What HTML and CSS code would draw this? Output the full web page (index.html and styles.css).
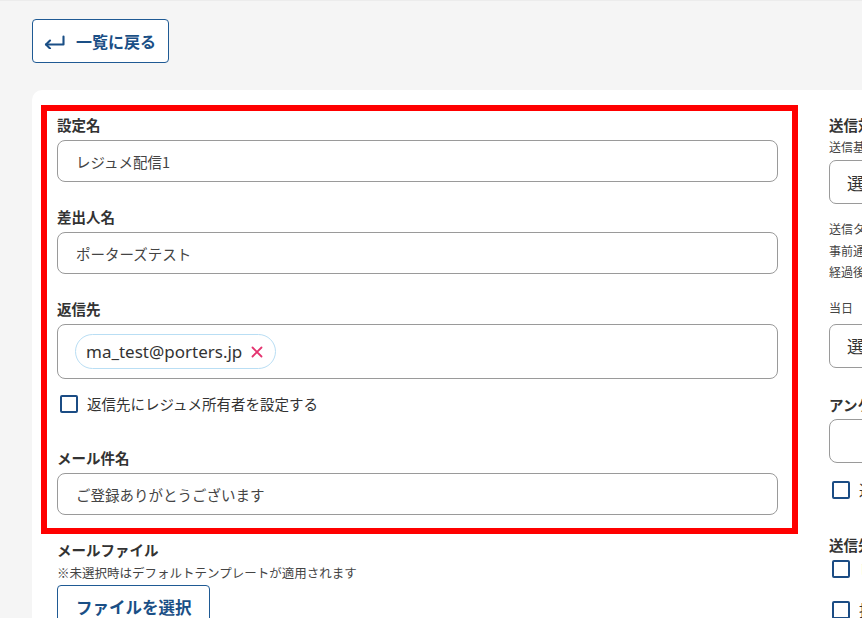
FILE: index.html
```html
<!DOCTYPE html>
<html lang="ja">
<head>
<meta charset="utf-8">
<title>レジュメ配信設定</title>
<link rel="stylesheet" href="styles.css">
</head>
<body>
<div class="page">
  <button class="back-btn">
    <svg class="back-icon" width="21" height="14" viewBox="0 0 21 14" fill="none" stroke="currentColor" stroke-width="2.1" stroke-linecap="round" stroke-linejoin="round">
      <path d="M19.5 1.5v8H2"/>
      <path d="M6 5.5L2 9.5l4 4"/>
    </svg>
    <span>一覧に戻る</span>
  </button>

  <div class="card">
    <div class="col-left">
      <div class="highlight">
        <div class="field">
          <div class="label">設定名</div>
          <div class="input">レジュメ配信1</div>
        </div>
        <div class="field">
          <div class="label">差出人名</div>
          <div class="input">ポーターズテスト</div>
        </div>
        <div class="field">
          <div class="label">返信先</div>
          <div class="input tags">
            <span class="chip">ma_test@porters.jp<svg class="chip-x" width="12" height="12" viewBox="0 0 12 12" stroke="currentColor" stroke-width="1.8" stroke-linecap="round"><path d="M1.5 1.5l9 9M10.5 1.5l-9 9"/></svg></span>
          </div>
          <label class="check-row"><span class="checkbox"></span>返信先にレジュメ所有者を設定する</label>
        </div>
        <div class="field field-last">
          <div class="label">メール件名</div>
          <div class="input">ご登録ありがとうございます</div>
        </div>
      </div>
      <div class="below">
        <div class="label">メールファイル</div>
        <div class="note">※未選択時はデフォルトテンプレートが適用されます</div>
        <button class="file-btn">ファイルを選択</button>
      </div>
    </div>

    <div class="col-right">
      <div class="label">送信対象</div>
      <div class="sub">送信基準日を選択してください</div>
      <div class="select">選択してください</div>
      <div class="desc">
        <div>送信タイミングを設定してください</div>
        <div>事前通知の場合は基準日より前に送信されます</div>
        <div>経過後の場合は基準日より後に送信されます</div>
      </div>
      <div class="sub2">当日</div>
      <div class="select">選択してください</div>
      <div class="label lbl-q">アンケート</div>
      <div class="input small"></div>
      <label class="check-row r-check"><span class="checkbox"></span>送信時にアンケートを添付する</label>
      <div class="label lbl-to">送信先</div>
      <label class="check-row r-check2"><span class="checkbox"></span>レジュメ所有者</label>
      <label class="check-row r-check3"><span class="checkbox"></span>担当者</label>
    </div>
  </div>
</div>
</body>
</html>
```

FILE: styles.css
```css
html, body {
  margin: 0;
  padding: 0;
  overflow: hidden;
  height: 100%;
}
body {
  background: #f5f5f5;
  font-family: "Noto Sans CJK JP", "Noto Sans", sans-serif;
  color: #333;
  border-top: 1px solid #ececec;
  box-sizing: border-box;
}
.page {
  padding: 18px 0 0 32px;
}
.back-btn {
  display: flex;
  align-items: center;
  gap: 11px;
  height: 44px;
  width: 137px;
  box-sizing: border-box;
  padding: 0 0 0 11px;
  border: 1px solid #1f5a94;
  border-radius: 4px;
  background: #fff;
  color: #1a4f86;
  font-family: inherit;
  font-size: 16px;
  font-weight: 700;
  cursor: pointer;
}
.back-icon {
  display: block;
  margin-top: 1px;
}
.card {
  margin-top: 27px;
  background: #fff;
  border-radius: 10px 0 0 0;
  width: 1100px;
  height: 600px;
  padding: 15px 0 0 9px;
  box-sizing: border-box;
  display: flex;
  gap: 31px;
}
.col-left {
  width: 757px;
  flex: none;
}
.highlight {
  border: 6px solid #ff0000;
  padding: 4px 14px 13px 10px;
}
.label {
  font-size: 14.5px;
  font-weight: 700;
  line-height: 20px;
  color: #333;
  white-space: nowrap;
}
.field {
  margin-bottom: 25px;
}
.field-last {
  margin-bottom: 0;
}
.field .label {
  margin-bottom: 5px;
}
.input {
  height: 42px;
  box-sizing: border-box;
  border: 1px solid #9a9a9a;
  border-radius: 8px;
  padding: 0 18px;
  display: flex;
  align-items: center;
  font-size: 14.5px;
  color: #444;
}
.input.tags {
  height: 55px;
  padding: 0 17px;
}
.chip {
  display: inline-flex;
  align-items: center;
  height: 35px;
  box-sizing: border-box;
  padding: 0 12px 0 10px;
  border: 1px solid #b9def4;
  border-radius: 18px;
  font-family: "Noto Sans", "Noto Sans CJK JP", sans-serif;
  font-size: 17px;
  color: #333;
}
.chip-x {
  color: #e4336f;
  margin-left: 9px;
  margin-top: 1px;
  display: block;
}
.check-row {
  display: flex;
  align-items: center;
  gap: 9px;
  font-size: 14.5px;
  color: #333;
  line-height: 20px;
  white-space: nowrap;
}
.field .check-row {
  margin-top: 15px;
  margin-left: 3px;
  margin-bottom: 34px;
}
.checkbox {
  width: 18px;
  height: 18px;
  box-sizing: border-box;
  border: 2px solid #1b4c84;
  border-radius: 2px;
  flex: none;
}
.below {
  padding: 6px 0 0 16px;
}
.note {
  font-size: 12.5px;
  line-height: 18px;
  color: #444;
  margin-top: 4px;
  white-space: nowrap;
}
.file-btn {
  margin-top: 3px;
  height: 44px;
  padding: 0 17px 0 18px;
  border: 1px solid #1f5a94;
  border-radius: 4px;
  background: #fff;
  color: #1a4f86;
  font-family: inherit;
  font-size: 16.5px;
  font-weight: 700;
}
.col-right {
  width: 260px;
  flex: none;
  padding-top: 10px;
}
.sub {
  font-size: 12px;
  line-height: 18px;
  margin-top: 3px;
  color: #444;
  white-space: nowrap;
}
.select {
  margin-top: 4px;
  height: 44px;
  box-sizing: border-box;
  border: 1px solid #9a9a9a;
  border-radius: 7px;
  padding: 0 17px;
  display: flex;
  align-items: center;
  font-size: 17px;
  color: #333;
  white-space: nowrap;
}
.desc {
  margin-top: 14px;
  font-size: 12px;
  line-height: 21.5px;
  color: #444;
  white-space: nowrap;
}
.sub2 {
  margin-top: 16px;
  font-size: 12px;
  line-height: 18px;
  color: #444;
}
.col-right .sub2 + .select {
  margin-top: 7px;
}
.lbl-q {
  margin-top: 27px;
}
.input.small {
  margin-top: 4px;
  height: 44px;
}
.r-check {
  margin-top: 17px;
  margin-left: 3px;
}
.lbl-to {
  margin-top: 35px;
}
.r-check2 {
  margin-top: 4px;
  margin-left: 3px;
}
.r-check3 {
  margin-top: 21px;
  margin-left: 3px;
}
```
